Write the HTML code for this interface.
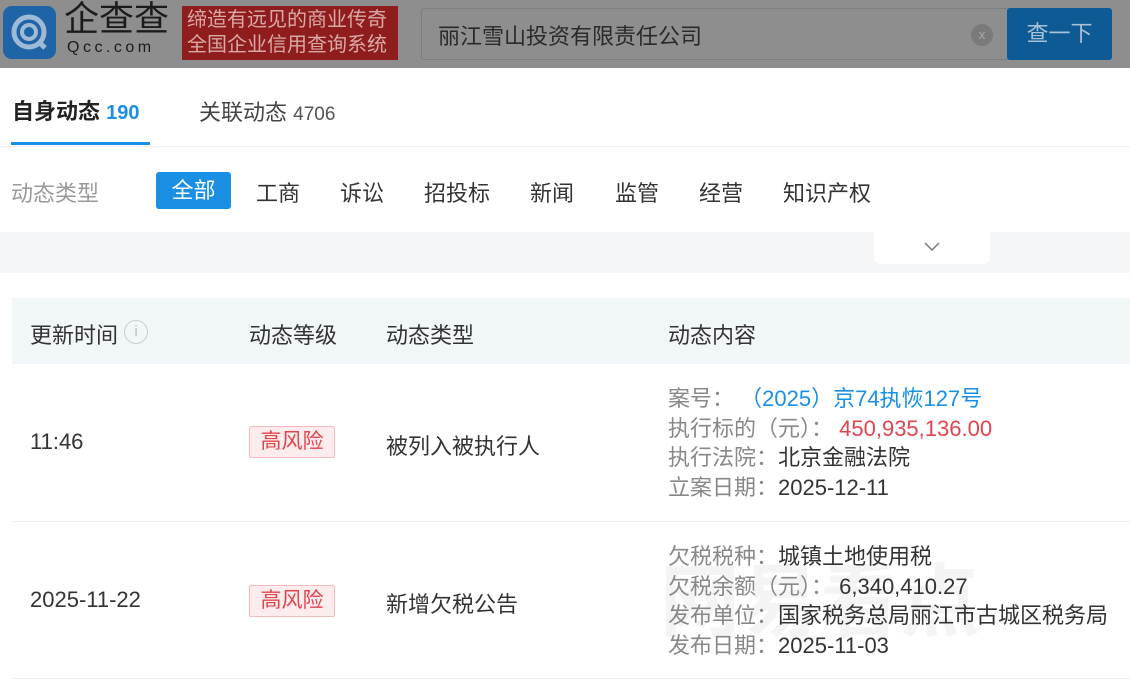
<!DOCTYPE html>
<html><head><meta charset="utf-8"><style>
*{margin:0;padding:0;box-sizing:border-box}
body{width:1130px;height:687px;overflow:hidden;background:#fff;font-family:"Liberation Sans","Noto Sans CJK SC",sans-serif;color:#333;position:relative}
.a{position:absolute;white-space:nowrap}
.hdr{position:absolute;left:0;top:0;width:1130px;height:68px;background:#8e8e8e}
.tag{position:absolute;width:86px;height:32px;border:1px solid #f3b9bd;background:#fdeced;color:#e0444c;font-size:21px;text-align:center;line-height:30px;border-radius:2px}
.lbl{color:#888}
.f{font-size:22px}
</style></head><body>
<div class="hdr"></div>
<div class="a" style="left:3px;top:6px;width:53px;height:53px;border-radius:9px;background:#1e64a6"></div>
<svg class="a" style="left:9px;top:12px" width="42" height="42" viewBox="0 0 42 42"><circle cx="20" cy="20" r="15" fill="none" stroke="#9fbad6" stroke-width="5"/><circle cx="20" cy="20" r="7" fill="none" stroke="#9fbad6" stroke-width="4"/><path d="M30 30 L36 36" stroke="#9fbad6" stroke-width="5"/></svg>
<div class="a" style="left:64px;top:-2px;font-size:35px;line-height:44px;color:#1b1b1b">企查查</div>
<div class="a" style="left:67px;top:38px;font-size:16px;line-height:20px;color:#1b1b1b;letter-spacing:3.5px">Qcc.com</div>
<div class="a" style="left:182px;top:6px;width:216px;height:54px;background:#8f1d1d"></div>
<div class="a" style="left:187px;top:8px;font-size:20px;line-height:25px;color:#d9a9a6">缔造有远见的商业传奇<br>全国企业信用查询系统</div>
<div class="a" style="left:421px;top:8px;width:588px;height:52px;border:1px solid #7d7d7d;border-radius:3px;background:#8e8e8e"></div>
<div class="a" style="left:438px;top:19px;font-size:22px;color:#2a2a2a">丽江雪山投资有限责任公司</div>
<div class="a" style="left:971px;top:24px;width:22px;height:22px;border-radius:50%;background:#7a7a7a;color:#aaa;font-size:13px;text-align:center;line-height:22px">x</div>
<div class="a" style="left:1007px;top:8px;width:105px;height:52px;background:#0d5a95;border-radius:3px;color:#a9c2d8;font-size:22px;text-align:center;line-height:52px">查一下</div>

<div class="a" style="left:12px;top:94px;font-size:22px;font-weight:bold;color:#222">自身动态 <span style="color:#1a8fe4;font-size:20px">190</span></div>
<div class="a" style="left:11px;top:142px;width:139px;height:3px;background:#1a8fe4"></div>
<div class="a" style="left:199px;top:95px;font-size:22px;color:#444">关联动态 <span style="font-size:19px;color:#555">4706</span></div>
<div class="a" style="left:0;top:146px;width:1130px;height:1px;background:#eee"></div>

<div class="a f" style="left:11px;top:176px;color:#999">动态类型</div>
<div class="a" style="left:156px;top:172px;width:75px;height:37px;background:#1a8fe4;border-radius:3px;color:#fff;font-size:22px;text-align:center;line-height:37px">全部</div>
<div class="a f" style="left:256px;top:176px">工商</div>
<div class="a f" style="left:340px;top:176px">诉讼</div>
<div class="a f" style="left:424px;top:176px">招投标</div>
<div class="a f" style="left:530px;top:176px">新闻</div>
<div class="a f" style="left:615px;top:176px">监管</div>
<div class="a f" style="left:699px;top:176px">经营</div>
<div class="a f" style="left:783px;top:176px">知识产权</div>

<div class="a" style="left:0;top:232px;width:1130px;height:41px;background:#f4f5f7"></div>
<div class="a" style="left:874px;top:232px;width:116px;height:32px;background:#fff;border-radius:0 0 6px 6px"></div>
<svg class="a" style="left:923px;top:240px" width="18" height="14"><path d="M2 3 L9 10 L16 3" fill="none" stroke="#777" stroke-width="1.5"/></svg>

<div class="a" style="left:12px;top:298px;width:1118px;height:66px;background:#f1f6f9"></div>
<div class="a f" style="left:30px;top:318px">更新时间</div>
<div class="a" style="left:124px;top:320px;width:24px;height:24px;border:1.5px solid #ccc;border-radius:50%;color:#bbb;font-size:15px;text-align:center;line-height:21px">i</div>
<div class="a f" style="left:249px;top:318px">动态等级</div>
<div class="a f" style="left:386px;top:318px">动态类型</div>
<div class="a f" style="left:668px;top:318px">动态内容</div>

<div class="a f" style="left:30px;top:429px">11:46</div>
<div class="tag" style="left:249px;top:426px">高风险</div>
<div class="a f" style="left:386px;top:429px">被列入被执行人</div>
<div class="a f" style="left:668px;top:384px;line-height:29.5px"><span class="lbl">案号：</span> <span style="color:#1a8fe4">（2025）京74执恢127号</span><br><span class="lbl">执行标的（元）：</span> <span style="color:#e0444c">450,935,136.00</span><br><span class="lbl">执行法院：</span>北京金融法院<br><span class="lbl">立案日期：</span>2025-12-11</div>
<div class="a" style="left:12px;top:521px;width:1118px;height:1px;background:#eee"></div>

<div class="a" style="left:660px;top:555px;font-size:80px;line-height:96px;color:rgba(0,0,0,0.045);font-weight:bold">网易看点</div>
<div class="a f" style="left:30px;top:587px">2025-11-22</div>
<div class="tag" style="left:249px;top:585px">高风险</div>
<div class="a f" style="left:386px;top:587px">新增欠税公告</div>
<div class="a f" style="left:668px;top:542px;line-height:29.5px"><span class="lbl">欠税税种：</span>城镇土地使用税<br><span class="lbl">欠税余额（元）：</span> 6,340,410.27<br><span class="lbl">发布单位：</span>国家税务总局丽江市古城区税务局<br><span class="lbl">发布日期：</span>2025-11-03</div>
<div class="a" style="left:12px;top:678px;width:1118px;height:1px;background:#eee"></div>
</body></html>
